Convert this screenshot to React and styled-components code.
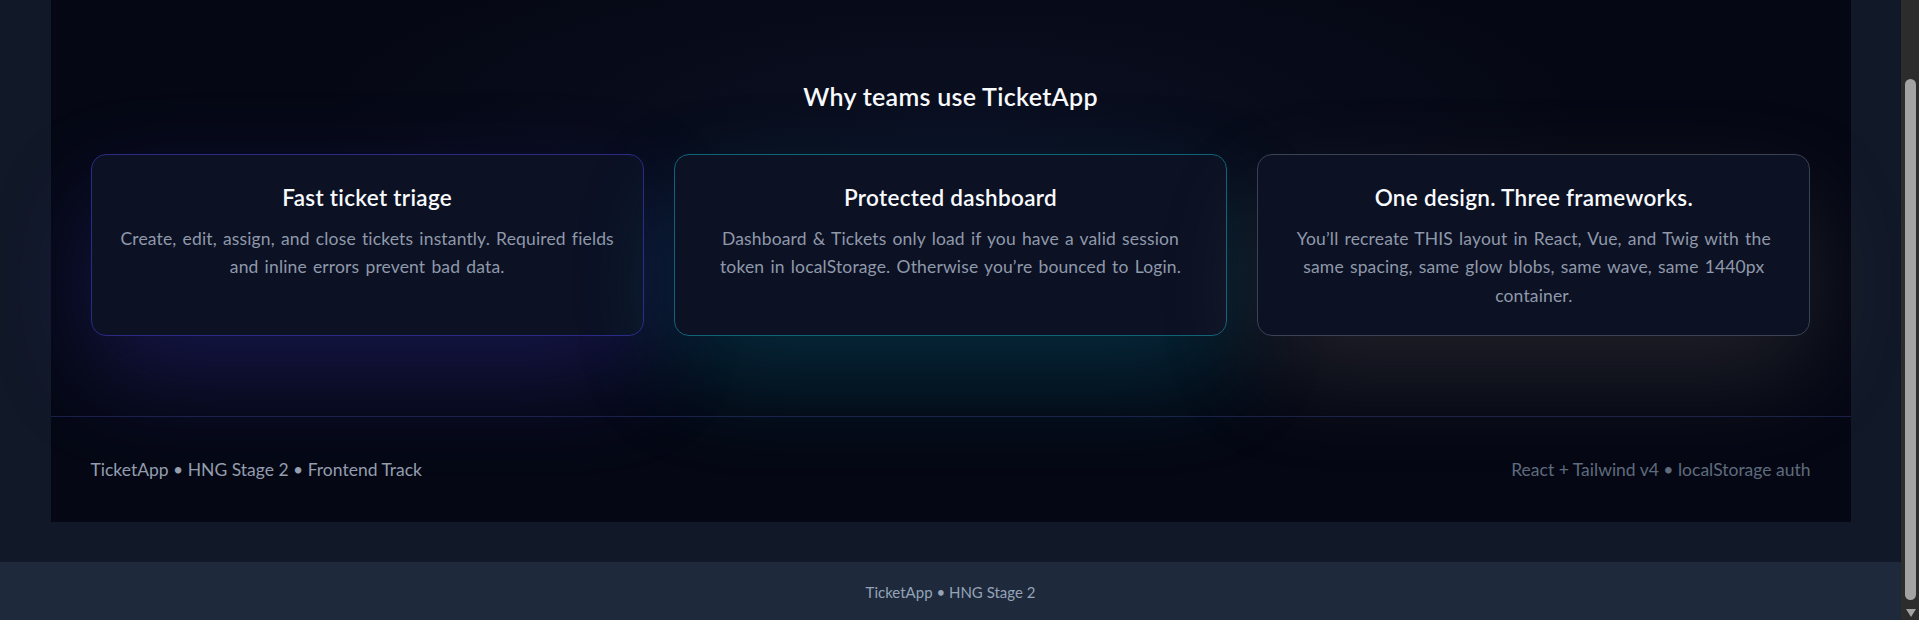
import React from 'react';
import styled, { createGlobalStyle } from 'styled-components';

const GlobalStyle = createGlobalStyle`
  html, body {
    margin: 0;
    padding: 0;
    background-color: #111827;
    font-family: Lato, "Noto Sans", sans-serif;
    -webkit-font-smoothing: antialiased;
  }

  * {
    box-sizing: border-box;
  }
`;

const Viewport = styled.div`
  display: flex;
  flex-direction: row;
  height: 100vh;
  overflow: hidden;
`;

const Main = styled.div`
  flex: 1;
  display: flex;
  flex-direction: column;
  min-width: 0;
`;

const Container = styled.div`
  width: 100%;
  max-width: 1800px;
  margin: 0 auto;
  flex-shrink: 0;
  background-color: #050814;
  background-image: radial-gradient(ellipse 900px 260px at 50% 120px, rgba(30, 41, 80, 0.22), transparent 70%);
`;

const Features = styled.section`
  padding: 79px 40px 80px;
  display: flex;
  flex-direction: column;
  align-items: center;
`;

const SectionTitle = styled.h2`
  margin: 0 0 40px;
  font-size: 25px;
  line-height: 35px;
  font-weight: 600;
  letter-spacing: 0.3px;
  color: #f8fafc;
`;

const CardGrid = styled.div`
  width: 100%;
  display: grid;
  grid-template-columns: repeat(3, 1fr);
  gap: 30px;
`;

const tones = {
  indigo: { border: '#2b2b86', glow: 'rgba(67, 56, 202, 0.3)' },
  teal: { border: '#0f6479', glow: 'rgba(8, 145, 178, 0.27)' },
  slate: { border: '#3a4254', glow: 'rgba(120, 113, 108, 0.24)' },
};

const Card = styled.div`
  background-color: #0c1124;
  border: 1px solid ${(p) => tones[p.$tone].border};
  border-radius: 15px;
  padding: 25px;
  text-align: center;
  box-shadow: 0 40px 100px -4px ${(p) => tones[p.$tone].glow};
`;

const CardTitle = styled.h3`
  margin: 0;
  font-size: 22.5px;
  line-height: 35px;
  font-weight: 600;
  letter-spacing: 0.3px;
  color: #f8fafc;
`;

const CardText = styled.p`
  margin: 10px 0 0;
  font-size: 17.5px;
  line-height: 28.4px;
  font-weight: 400;
  letter-spacing: 0.15px;
  word-spacing: 1.5px;
  color: #8f99aa;
`;

const Footer = styled.footer`
  border-top: 1px solid #1b2049;
  padding: 40px;
  display: flex;
  justify-content: space-between;
  align-items: center;
  font-size: 17.5px;
  line-height: 25px;
`;

const FooterText = styled.span`
  color: ${(p) => (p.$dim ? '#5f6b7d' : '#939dae')};
`;

const Gap = styled.div`
  height: 40px;
  flex-shrink: 0;
`;

const BottomBar = styled.div`
  flex: 1 0 auto;
  background-color: #1e293b;
  padding: 20px;
  text-align: center;
  font-size: 15px;
  line-height: 20px;
  color: #94a3b8;
`;

const Scrollbar = styled.div`
  width: 18px;
  flex-shrink: 0;
  background-color: #2c2c2c;
  display: flex;
  flex-direction: column;
  align-items: center;
  padding: 79px 0 3px 1px;
`;

const Thumb = styled.div`
  flex: 1;
  width: 11px;
  border-radius: 6px;
  background-color: #a3a3a3;
`;

const Arrow = styled.div`
  margin-top: 9px;
  width: 0;
  height: 0;
  border-left: 5px solid transparent;
  border-right: 5px solid transparent;
  border-top: 8px solid #a3a3a3;
`;

const features = [
  {
    tone: 'indigo',
    title: 'Fast ticket triage',
    text: 'Create, edit, assign, and close tickets instantly. Required fields and inline errors prevent bad data.',
  },
  {
    tone: 'teal',
    title: 'Protected dashboard',
    text: 'Dashboard & Tickets only load if you have a valid session token in localStorage. Otherwise you\u2019re bounced to Login.',
  },
  {
    tone: 'slate',
    title: 'One design. Three frameworks.',
    text: 'You\u2019ll recreate THIS layout in React, Vue, and Twig with the same spacing, same glow blobs, same wave, same 1440px container.',
  },
];

export default function App() {
  return (
    <Viewport>
      <GlobalStyle />
      <Main>
        <Container>
          <Features>
            <SectionTitle>Why teams use TicketApp</SectionTitle>
            <CardGrid>
              {features.map((f) => (
                <Card key={f.title} $tone={f.tone}>
                  <CardTitle>{f.title}</CardTitle>
                  <CardText>{f.text}</CardText>
                </Card>
              ))}
            </CardGrid>
          </Features>
          <Footer>
            <FooterText>TicketApp • HNG Stage 2 • Frontend Track</FooterText>
            <FooterText $dim>React + Tailwind v4 • localStorage auth</FooterText>
          </Footer>
        </Container>
        <Gap />
        <BottomBar>TicketApp • HNG Stage 2</BottomBar>
      </Main>
      <Scrollbar>
        <Thumb />
        <Arrow />
      </Scrollbar>
    </Viewport>
  );
}
